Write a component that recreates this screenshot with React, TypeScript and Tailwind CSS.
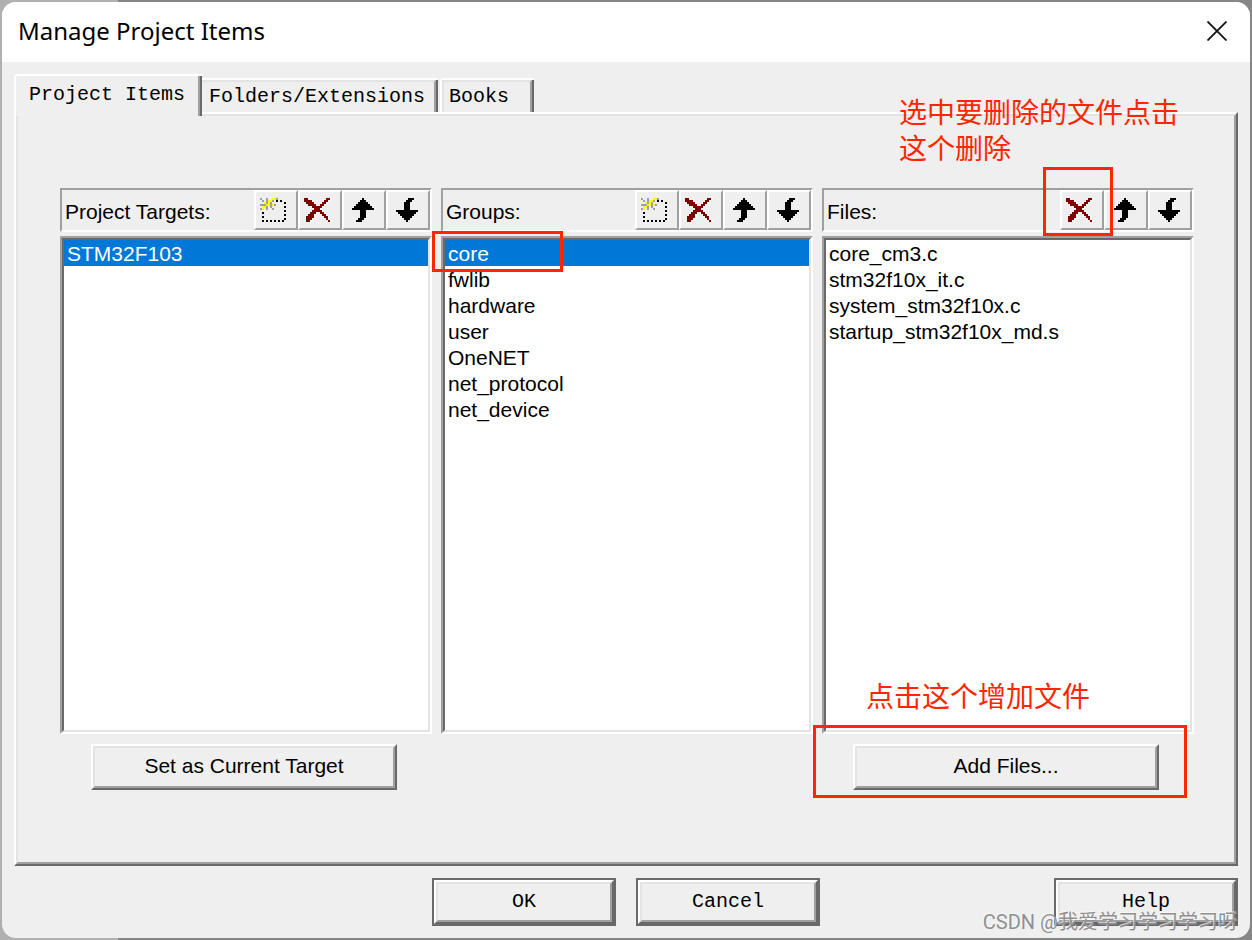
import { useState } from 'react'
import type { ReactNode } from 'react'

type IconName = 'new' | 'delete' | 'up' | 'down'

const ICONS: Record<IconName, string[]> = {
  new: [
    'g..g..yyg....',
    '.g.gyyg.k.k..',
    '..ygyg......k',
    'gggyygyg.....',
    '.yyg.g......k',
    'gy.g..g......',
    '............k',
    '.k...........',
    '............k',
    '.k...........',
    '............k',
    '.k.k.k.k.k.k.',
  ],
  delete: [
    'rr.........rr',
    'rrrr......rr.',
    '.rrrr....rr..',
    '..rrrr..rr...',
    '....rrrrr....',
    '.....rrr.....',
    '....rrrrr....',
    '...rrr..rr...',
    '..rrr....rr..',
    '.rrrr.....rr.',
    '.rrr.......r.',
    '.rr.........r',
  ],
  up: [
    '.......k.....',
    '......kkk....',
    '.....kkkkk...',
    '....kkkkkkk..',
    '...kkkkkkkkk.',
    '..kkkkkkkkkkk',
    '......kkk....',
    '......kkk....',
    '......kkk....',
    '......kkk....',
    '.....kkk.....',
    '....kkk......',
  ],
  down: [
    '........kkk..',
    '.......kkk...',
    '......kkk....',
    '......kkk....',
    '......kkk....',
    '......kkk....',
    '..kkkkkkkkkkk',
    '...kkkkkkkkk.',
    '....kkkkkkk..',
    '.....kkkkk...',
    '......kkk....',
    '.......k.....',
  ],
}

const INK: Record<string, string> = { k: '#000', r: '#800000', y: '#ffff00', g: '#a0a0a0' }

function PixelIcon({ name }: { name: IconName }) {
  const cells = ICONS[name].flatMap((row, y) =>
    [...row].map((c, x) => ({ c, x, y })).filter(({ c }) => c !== '.'),
  )
  return (
    <svg width="32" height="24" viewBox="0 0 16 12" shapeRendering="crispEdges" aria-hidden="true" className="shrink-0">
      {name === 'delete' &&
        cells.map(({ x, y }) => <rect key={`s${x}-${y}`} x={x + 1} y={y} width="1" height="1" fill="#fff" />)}
      {cells.map(({ c, x, y }) => (
        <rect key={`${x}-${y}`} x={x} y={y} width="1" height="1" fill={INK[c]} />
      ))}
    </svg>
  )
}

const TOOL_LABEL: Record<IconName, string> = { new: 'New', delete: 'Delete', up: 'Move up', down: 'Move down' }

function ToolButton({ name, marked }: { name: IconName; marked?: boolean }) {
  return (
    <button
      type="button"
      aria-label={TOOL_LABEL[name]}
      className="relative flex h-10 w-11 items-center justify-center border-2 border-t-white border-r-[#a0a0a0] border-b-[#a0a0a0] border-l-white"
    >
      <PixelIcon name={name} />
      {marked && <span className="absolute -top-[25px] -left-[19px] z-10 h-[69px] w-[70px] border-[3px] border-[#ff2600]" />}
    </button>
  )
}

interface ColumnProps {
  title: string
  tools: IconName[]
  items: string[]
  selected?: string
  markedTool?: IconName
  markSelected?: boolean
  note?: ReactNode
  children?: ReactNode
}

function Column({ title, tools, items, selected, markedTool, markSelected, note, children }: ColumnProps) {
  const [current, setCurrent] = useState(selected)
  return (
    <section className="relative flex min-w-0 flex-col">
      <div className="flex h-11 justify-between border-2 border-t-[#a0a0a0] border-r-white border-b-white border-l-[#a0a0a0]">
        <h2 className="self-center pt-1 pl-[3px] text-[21px] leading-[26px] whitespace-nowrap">{title}</h2>
        <div className="flex">
          {tools.map((t) => (
            <ToolButton key={t} name={t} marked={t === markedTool} />
          ))}
        </div>
      </div>
      <div className="mt-1 flex flex-1 border-2 border-t-[#a0a0a0] border-r-white border-b-white border-l-[#a0a0a0]">
        <ul
          role="listbox"
          aria-label={title}
          className="min-h-80 flex-1 border-2 border-t-[#696969] border-r-[#e3e3e3] border-b-[#e3e3e3] border-l-[#696969] bg-white"
        >
          {items.map((item) => (
            <li
              key={item}
              role="option"
              aria-selected={item === current}
              onClick={() => setCurrent(item)}
              className="relative h-[26px] px-[3px] text-[21px] leading-[28px] whitespace-nowrap aria-selected:bg-[#0078d7] aria-selected:text-white"
            >
              {item}
              {markSelected && item === selected && (
                <span className="absolute -top-[9px] -left-[13px] z-10 h-[41px] w-[131px] border-[3px] border-[#ff2600]" />
              )}
            </li>
          ))}
        </ul>
      </div>
      <div className="mt-2.5 h-[46px]">{children}</div>
      {note}
    </section>
  )
}

function PanelButton({ label, marked }: { label: string; marked?: boolean }) {
  return (
    <button
      type="button"
      className="relative ml-[31px] flex h-[46px] w-[306px] border-2 border-t-white border-r-[#696969] border-b-[#696969] border-l-white text-[21px]"
    >
      <span className="flex h-full flex-1 items-center justify-center border-2 border-t-[#e3e3e3] border-r-[#a0a0a0] border-b-[#a0a0a0] border-l-[#e3e3e3] pb-0.5">
        {label}
      </span>
      {marked && <span className="absolute -top-[21px] -left-[42px] z-10 h-[73px] w-[374px] border-[3px] border-[#ff2600]" />}
    </button>
  )
}

function DialogButton({ label }: { label: string }) {
  return (
    <button
      type="button"
      className="flex h-12 w-46 border-2 border-[#696969] font-['Liberation_Mono','NSimSun',monospace] text-[20px]"
    >
      <span className="flex h-full flex-1 border-2 border-t-white border-r-[#696969] border-b-[#696969] border-l-white">
        <span className="flex h-full flex-1 items-center justify-center border-2 border-t-[#e3e3e3] border-r-[#a0a0a0] border-b-[#a0a0a0] border-l-[#e3e3e3]">
          {label}
        </span>
      </span>
    </button>
  )
}

const NOTE =
  "pointer-events-none absolute z-10 font-['Noto_Sans_CJK_SC',sans-serif] text-[28px] leading-9 whitespace-nowrap text-[#ff2600]"

export default function App() {
  return (
    <div className="flex min-h-screen bg-linear-to-r from-[#b0b0b0] from-[118px] to-[#868686] to-[118px] p-0.5 font-['Liberation_Sans',Arial,sans-serif] text-black">
      <div role="dialog" aria-labelledby="dialog-title" className="relative flex flex-1 flex-col overflow-hidden rounded-[14px] bg-[#efefef]">
        <header className="flex h-15 items-center justify-between bg-white pr-[23px] pb-[3px] pl-4">
          <h1 id="dialog-title" className="font-['Noto_Sans','Segoe_UI',sans-serif] text-[24px] leading-8">
            Manage Project Items
          </h1>
          <button type="button" aria-label="Close">
            <svg width="20" height="20" viewBox="0 0 20 20" fill="none" stroke="#111" strokeWidth="1.8" aria-hidden="true">
              <path d="M0.5 0.5 19.5 19.5M19.5 0.5 0.5 19.5" />
            </svg>
          </button>
        </header>

        <main className="flex flex-1 flex-col px-3 pt-3">
          <div role="tablist" className="relative z-[1] -mb-1 flex items-start font-['Liberation_Mono','NSimSun',monospace] text-[20px]">
            <button
              type="button"
              role="tab"
              aria-selected="true"
              className="h-[42px] w-[188px] rounded-tl-sm border-t-2 border-l-2 border-t-white border-l-white bg-[#efefef] text-left"
            >
              <span className="flex h-full items-center border-r-2 border-[#696969]">
                <span className="flex h-full flex-1 items-center border-r-2 border-[#a0a0a0] pb-[3px] pl-[13px]">Project Items</span>
              </span>
            </button>
            <button
              type="button"
              role="tab"
              aria-selected="false"
              className="mt-1 h-[34px] w-[236px] border-t-2 border-t-white text-left"
            >
              <span className="flex h-full items-center border-r-2 border-[#696969]">
                <span className="flex h-full flex-1 items-center border-t-2 border-r-2 border-t-[#e3e3e3] border-r-[#a0a0a0] pl-[7px]">Folders/Extensions</span>
              </span>
            </button>
            <button
              type="button"
              role="tab"
              aria-selected="false"
              className="mt-1 ml-0.5 h-[34px] w-[94px] rounded-tl-sm border-t-2 border-l-2 border-t-white border-l-white text-left"
            >
              <span className="flex h-full items-center border-r-2 border-[#696969]">
                <span className="flex h-full flex-1 items-center border-2 border-b-0 border-t-[#e3e3e3] border-r-[#a0a0a0] border-l-[#e3e3e3] pl-[5px]">Books</span>
              </span>
            </button>
          </div>

          <div role="tabpanel" className="flex flex-1 border-2 border-t-white border-r-[#696969] border-b-[#696969] border-l-white">
            <div className="grid flex-1 grid-cols-3 gap-[9px] border-2 border-t-[#e3e3e3] border-r-[#a0a0a0] border-b-[#a0a0a0] border-l-[#e3e3e3] pt-[72px] pr-10 pb-[72px] pl-[42px]">
              <Column title="Project Targets:" tools={['new', 'delete', 'up', 'down']} items={['STM32F103']} selected="STM32F103">
                <PanelButton label="Set as Current Target" />
              </Column>
              <Column
                title="Groups:"
                tools={['new', 'delete', 'up', 'down']}
                items={['core', 'fwlib', 'hardware', 'user', 'OneNET', 'net_protocol', 'net_device']}
                selected="core"
                markSelected
              />
              <Column
                title="Files:"
                tools={['delete', 'up', 'down']}
                items={['core_cm3.c', 'stm32f10x_it.c', 'system_stm32f10x.c', 'startup_stm32f10x_md.s']}
                markedTool="delete"
                note={
                  <>
                    <p className={`${NOTE} -top-[95px] left-[77px]`}>
                      选中要删除的文件点击
                      <br />
                      这个删除
                    </p>
                    <p className={`${NOTE} bottom-[77px] left-11`}>点击这个增加文件</p>
                  </>
                }
              >
                <PanelButton label="Add Files..." marked />
              </Column>
            </div>
          </div>
        </main>

        <footer className="flex justify-end px-3 pt-3 pb-3">
          <DialogButton label="OK" />
          <div className="ml-5">
            <DialogButton label="Cancel" />
          </div>
          <div className="ml-[234px]">
            <DialogButton label="Help" />
          </div>
        </footer>

        <p className="pointer-events-none absolute right-3 bottom-0.5 z-10 font-[Roboto,'Noto_Sans_CJK_SC',sans-serif] text-[20px] leading-7 whitespace-nowrap text-[#909090] [text-shadow:-1px_-1px_0_#ffffffaa]">
          CSDN @我爱学习学习学习呀
        </p>
      </div>
    </div>
  )
}
